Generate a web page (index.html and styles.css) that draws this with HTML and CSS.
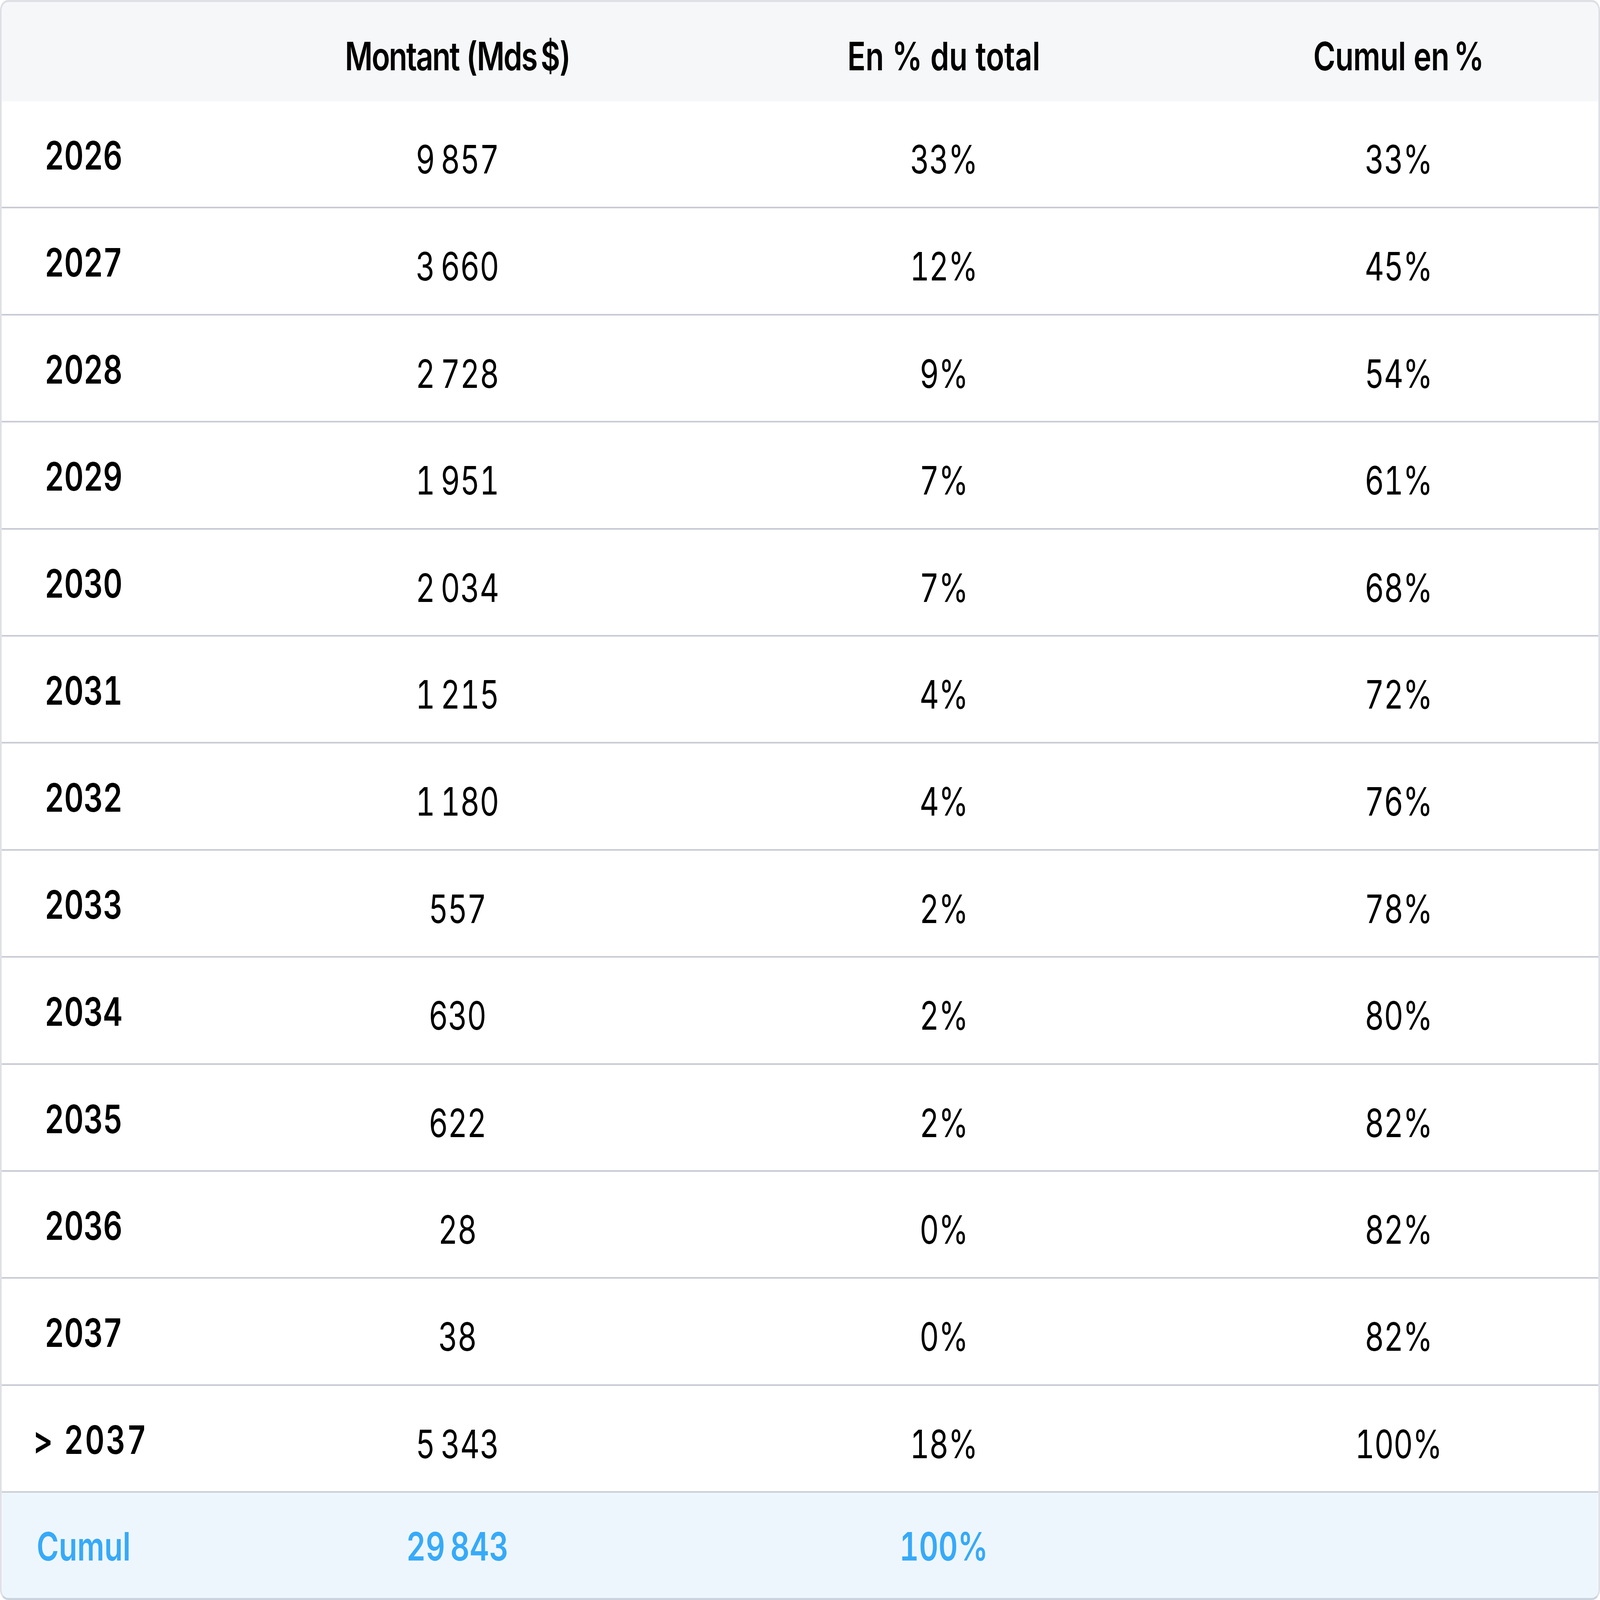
FILE: index.html
```html
<!DOCTYPE html>
<html lang="fr">
<head>
<meta charset="utf-8">
<title>Échéancier</title>
<link rel="stylesheet" href="styles.css">
</head>
<body>
<div class="stage">
<div class="card" id="card">
  <div class="row head">
    <div class="cell c1"></div>
    <div class="cell h-montant">Montant (Mds&#8239;$)</div>
    <div class="cell h-pct">En % du total</div>
    <div class="cell h-cum">Cumul en&#8239;%</div>
  </div>
  <div class="row line"><div class="cell c1 year">2026</div><div class="cell val">9&#8239;857</div><div class="cell val">33%</div><div class="cell val">33%</div></div>
  <div class="row line"><div class="cell c1 year">2027</div><div class="cell val">3&#8239;660</div><div class="cell val">12%</div><div class="cell val">45%</div></div>
  <div class="row line"><div class="cell c1 year">2028</div><div class="cell val">2&#8239;728</div><div class="cell val">9%</div><div class="cell val">54%</div></div>
  <div class="row line"><div class="cell c1 year">2029</div><div class="cell val">1&#8239;951</div><div class="cell val">7%</div><div class="cell val">61%</div></div>
  <div class="row line"><div class="cell c1 year">2030</div><div class="cell val">2&#8239;034</div><div class="cell val">7%</div><div class="cell val">68%</div></div>
  <div class="row line"><div class="cell c1 year">2031</div><div class="cell val">1&#8239;215</div><div class="cell val">4%</div><div class="cell val">72%</div></div>
  <div class="row line"><div class="cell c1 year">2032</div><div class="cell val">1&#8239;180</div><div class="cell val">4%</div><div class="cell val">76%</div></div>
  <div class="row line"><div class="cell c1 year">2033</div><div class="cell val">557</div><div class="cell val">2%</div><div class="cell val">78%</div></div>
  <div class="row line"><div class="cell c1 year">2034</div><div class="cell val">630</div><div class="cell val">2%</div><div class="cell val">80%</div></div>
  <div class="row line"><div class="cell c1 year">2035</div><div class="cell val">622</div><div class="cell val">2%</div><div class="cell val">82%</div></div>
  <div class="row line"><div class="cell c1 year">2036</div><div class="cell val">28</div><div class="cell val">0%</div><div class="cell val">82%</div></div>
  <div class="row line"><div class="cell c1 year">2037</div><div class="cell val">38</div><div class="cell val">0%</div><div class="cell val">82%</div></div>
  <div class="row line"><div class="cell c1 year year-wide">&gt; 2037</div><div class="cell val">5&#8239;343</div><div class="cell val">18%</div><div class="cell val">100%</div></div>
  <div class="row foot">
    <div class="cell c1">Cumul</div>
    <div class="cell">29&#8239;843</div>
    <div class="cell">100%</div>
    <div class="cell"></div>
  </div>
</div>
</div>
<script src="fit.js"></script>
</body>
</html>
```
FILE: styles.css
```css
html, body {
  margin: 0;
  padding: 0;
  background: #ffffff;
  overflow: hidden;
}

body {
  font-family: "Inter", "Noto Sans", sans-serif;
  color: #000000;
}

.stage {
  width: 100vw;
  height: 100vh;
  overflow: hidden;
}

.card {
  width: 6754px;
  height: 5208px;
  box-sizing: border-box;
  border: 7px solid #dfe0e6;
  border-bottom-color: #cbd3dd;
  border-radius: 34px;
  overflow: hidden;
  display: flex;
  flex-direction: column;
  transform-origin: 0 0;
}

.row {
  display: grid;
  grid-template-columns: 220fr 454fr 500fr 392fr;
  font-size: 127px;
  line-height: 154px;
  box-sizing: border-box;
  flex: none;
}

.cell {
  text-align: center;
  font-variant-numeric: tabular-nums;
  white-space: nowrap;
}

.c1 {
  padding-right: 255px;
}

.head {
  height: 323px;
  padding-top: 99px;
  background: #f6f7f9;
  font-weight: 600;
}

.h-montant {
  letter-spacing: -0.035em;
}

.h-cum {
  letter-spacing: -0.01em;
}

.line {
  height: 348.4px;
  border-bottom: 5px solid #c6c9d3;
}

.year {
  font-weight: 600;
  padding-top: 99px;
}

.year-wide {
  letter-spacing: 0.05em;
  padding-left: 60px;
}

.val {
  font-weight: 400;
  padding-top: 112px;
  letter-spacing: -0.01em;
}

.foot {
  flex: 1;
  padding-top: 98px;
  background: #eef6fd;
  color: #36aaf9;
  font-weight: 600;
}
```
FILE: fit.js
```js
(function () {
  var card = document.getElementById('card');
  function fit() {
    var sx = window.innerWidth / 6754;
    var sy = window.innerHeight / 5208;
    card.style.transform = 'scale(' + sx + ',' + sy + ')';
  }
  fit();
  window.addEventListener('resize', fit);
})();
```
